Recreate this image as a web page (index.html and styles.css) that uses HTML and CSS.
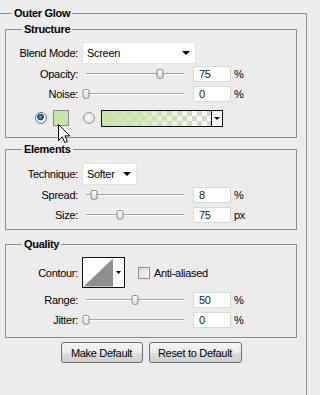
FILE: index.html
```html
<!DOCTYPE html>
<html lang="en">
<head>
    <meta charset="UTF-8">
    <title>Outer Glow</title>
    <link rel="stylesheet" href="styles.css">
</head>
<body>
    <fieldset class="panel">
        <legend>Outer Glow</legend>

        <fieldset class="group structure">
            <legend>Structure</legend>
            <div class="row row-select">
                <span class="label">Blend Mode:</span>
                <div class="select blend"><span>Screen</span><span class="caret"></span></div>
            </div>
            <div class="row">
                <span class="label">Opacity:</span>
                <div class="slider"><span class="thumb" style="left: 75%"></span></div>
                <div class="num">75</div>
                <span class="unit">%</span>
            </div>
            <div class="row">
                <span class="label">Noise:</span>
                <div class="slider"><span class="thumb" style="left: 0%"></span></div>
                <div class="num">0</div>
                <span class="unit">%</span>
            </div>
            <div class="row row-color">
                <span class="radio checked"></span>
                <span class="swatch"></span>
                <span class="radio"></span>
                <div class="gradient">
                    <span class="gradient-fill"></span>
                    <span class="gradient-drop"><span class="caret small"></span></span>
                </div>
                <svg class="cursor" width="13" height="20" viewBox="0 0 13 20">
                    <path d="M0.5 0.5 V16.5 L4.3 12.8 L6.8 18.6 L9.3 17.5 L6.9 11.9 H11.8 Z" fill="#fff" stroke="#000" stroke-width="1" stroke-linejoin="miter"/>
                </svg>
            </div>
        </fieldset>

        <fieldset class="group elements">
            <legend>Elements</legend>
            <div class="row row-select">
                <span class="label">Technique:</span>
                <div class="select technique"><span>Softer</span><span class="caret"></span></div>
            </div>
            <div class="row">
                <span class="label">Spread:</span>
                <div class="slider"><span class="thumb" style="left: 8%"></span></div>
                <div class="num">8</div>
                <span class="unit">%</span>
            </div>
            <div class="row">
                <span class="label">Size:</span>
                <div class="slider"><span class="thumb" style="left: 35%"></span></div>
                <div class="num">75</div>
                <span class="unit">px</span>
            </div>
        </fieldset>

        <fieldset class="group quality">
            <legend>Quality</legend>
            <div class="row row-contour">
                <span class="label">Contour:</span>
                <svg class="contour" width="43" height="31" viewBox="0 0 43 31">
                    <rect x="0.5" y="0.5" width="42" height="30" fill="#fff" stroke="#111"/>
                    <polygon points="1.5,29.5 31,1.5 31,29.5" fill="#8f8f8f"/>
                    <polygon points="34,14 39,14 36.5,17" fill="#000"/>
                </svg>
                <span class="check"></span>
                <span class="check-label">Anti-aliased</span>
            </div>
            <div class="row row-range">
                <span class="label">Range:</span>
                <div class="slider"><span class="thumb" style="left: 50%"></span></div>
                <div class="num">50</div>
                <span class="unit">%</span>
            </div>
            <div class="row">
                <span class="label">Jitter:</span>
                <div class="slider"><span class="thumb" style="left: 0%"></span></div>
                <div class="num">0</div>
                <span class="unit">%</span>
            </div>
        </fieldset>

        <div class="actions">
            <button class="btn make">Make Default</button>
            <button class="btn reset">Reset to Default</button>
        </div>
    </fieldset>
</body>
</html>
```

FILE: styles.css
```css
body {
    margin: 0;
    background-color: #ececec;
    font-family: "Liberation Sans", Arial, sans-serif;
    font-size: 11px;
    letter-spacing: -0.3px;
    color: #000;
    overflow: hidden;
}
legend {
    font-weight: bold;
    line-height: 13px;
    padding: 0 2px;
}
.panel {
    margin: 7px 0 0 0;
    padding: 0 9px 40px 5px;
    width: 292px;
    border: 1px solid #8e8e8e;
    border-left: none;
}
.panel > legend {
    margin-left: 7px;
}
.group {
    margin: 3px 0 0 0;
    padding: 0 0 9px 0;
    border: 1px solid #8e8e8e;
    min-width: 0;
}
.group > legend {
    margin-left: 16px;
}
.elements {
    margin-top: 5px;
    padding-bottom: 4px;
}
.quality {
    margin-top: 8px;
    padding-bottom: 7px;
}
.row {
    display: flex;
    align-items: center;
    height: 20px;
    position: relative;
}
.label {
    width: 72px;
    text-align: right;
    flex: none;
}
.row-select {
    height: 22px;
    margin-top: 6px;
}
.elements .row-select {
    margin-top: 7px;
}
.select {
    display: flex;
    align-items: center;
    justify-content: space-between;
    box-sizing: border-box;
    height: 22px;
    margin-left: 4px;
    padding: 0 5px 0 4px;
    background-color: #fff;
    border: 1px solid #e2e2e2;
}
.blend {
    width: 114px;
}
.technique {
    width: 55px;
}
.caret {
    width: 0;
    height: 0;
    border-left: 4px solid transparent;
    border-right: 4px solid transparent;
    border-top: 4px solid #000;
}
.caret.small {
    border-left-width: 3px;
    border-right-width: 3px;
    border-top-width: 3px;
}
.slider {
    position: relative;
    width: 98px;
    height: 0;
    margin-left: 8px;
    border-top: 1px solid #a6a6a6;
    border-bottom: 1px solid #fbfbfb;
}
.thumb {
    position: absolute;
    top: -5px;
    width: 5px;
    height: 8px;
    transform: translateX(-50%);
    border: 1px solid #8a8a8a;
    border-radius: 2px 2px 3px 3px;
    background: linear-gradient(#fdfdfd, #d9d9d9);
}
.num {
    box-sizing: border-box;
    width: 38px;
    height: 16px;
    margin-left: 9px;
    padding: 1px 0 0 5px;
    line-height: 13px;
    background-color: #fff;
    border: 1px solid #dadada;
    color: #10203a;
}
.unit {
    margin-left: 3px;
}
.row-color {
    margin-top: 4px;
}
.radio {
    box-sizing: border-box;
    width: 12px;
    height: 12px;
    border-radius: 50%;
    border: 1px solid #9a9a9a;
    background: radial-gradient(circle at 50% 45%, #fafafa 0, #d6d6d6 100%);
    flex: none;
}
.radio.checked {
    margin-left: 29px;
    border-color: #6c6c6c;
    background: radial-gradient(circle at 45% 40%, #7fc6f0 0, #1d73b3 1.5px, #0b3d69 3px, #fff 3.6px, #e6e6e6 100%);
}
.swatch {
    box-sizing: border-box;
    width: 16px;
    height: 16px;
    margin: 0 14px 0 6px;
    border: 1px solid #8c8c8c;
    background-color: #c6e7a8;
}
.gradient {
    display: flex;
    box-sizing: border-box;
    width: 122px;
    height: 17px;
    margin-left: 6px;
    border: 1px solid #111;
}
.gradient-fill {
    flex: 1;
    background:
        linear-gradient(to right, #c6e7a8 0%, rgba(198, 231, 168, 0.75) 35%, rgba(198, 231, 168, 0) 100%),
        linear-gradient(45deg, #d4d4d4 25%, transparent 25%, transparent 75%, #d4d4d4 75%),
        linear-gradient(45deg, #d4d4d4 25%, #fff 25%, #fff 75%, #d4d4d4 75%);
    background-size: 100% 100%, 10px 10px, 10px 10px;
    background-position: 0 0, 0 0, 5px 5px;
}
.gradient-drop {
    display: flex;
    align-items: center;
    justify-content: center;
    width: 10px;
    border-left: 1px solid #111;
    background-color: #f6f6f6;
}
.cursor {
    position: absolute;
    left: 52px;
    top: 16px;
}
.row-contour {
    height: 31px;
    margin-top: 6px;
}
.contour {
    margin-left: 4px;
    flex: none;
}
.check {
    box-sizing: border-box;
    width: 12px;
    height: 12px;
    margin-left: 13px;
    border: 1px solid #8f8f8f;
    background: linear-gradient(135deg, #dcdcdc, #f8f8f8);
}
.check-label {
    margin-left: 4px;
}
.row-range {
    margin-top: 2px;
}
.actions {
    display: flex;
    justify-content: center;
    gap: 6px;
    margin-top: 4px;
}
.btn {
    height: 21px;
    padding: 0;
    font-family: inherit;
    font-size: 11px;
    letter-spacing: -0.3px;
    color: #000;
    border: 1px solid #707070;
    border-radius: 3px;
    background: linear-gradient(#f4f4f4 0%, #ebebeb 50%, #dddddd 51%, #cfcfcf 100%);
}
.make {
    width: 82px;
}
.reset {
    width: 93px;
}
```
